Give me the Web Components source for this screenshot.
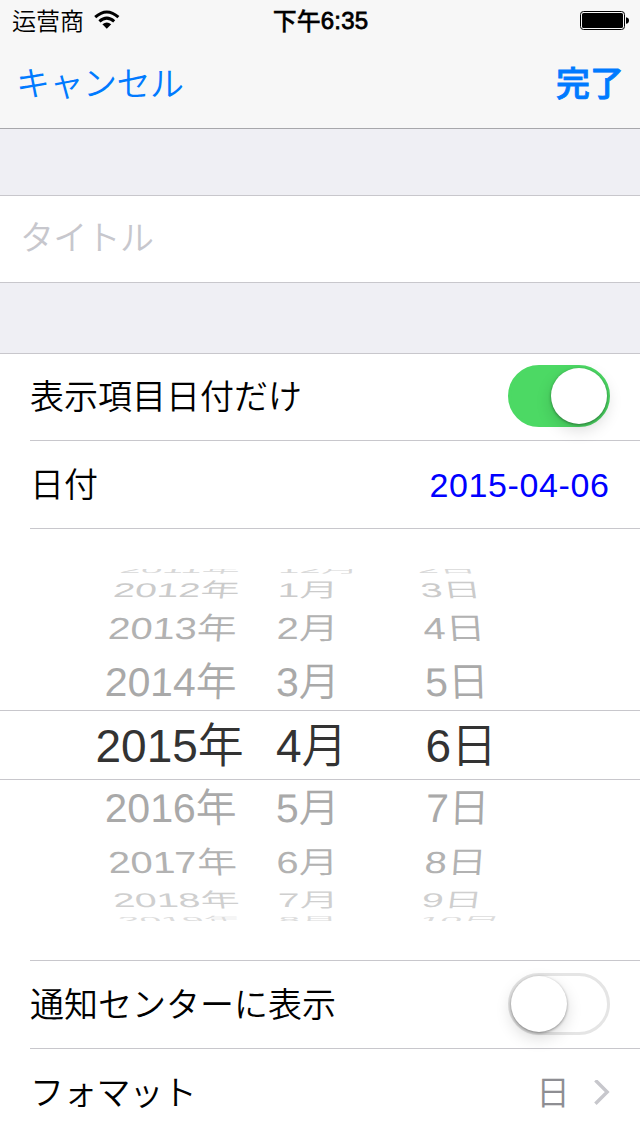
<!DOCTYPE html>
<html lang="ja">
<head>
<meta charset="utf-8">
<title>日付</title>
<style>
html,body{margin:0;padding:0;width:640px;height:1136px;overflow:hidden;background:#efeff4;font-family:"Liberation Sans","Noto Sans CJK JP",sans-serif;font-size:34px;color:#000}
</style>
</head>
<body>
<date-editor></date-editor>
<script>
const define = (name, markup, setup) => {
  const tpl = document.createElement('template');
  tpl.innerHTML = markup;
  customElements.define(name, class extends HTMLElement {
    connectedCallback() {
      if (this.shadowRoot) return;
      this.attachShadow({ mode: 'open' }).append(tpl.content.cloneNode(true));
      if (setup) setup(this, this.shadowRoot);
    }
  });
};

define('status-bar', `
<style>
:host{display:grid;grid-template-columns:1fr auto 1fr;align-items:center;height:40px;padding:0 11px 0 12px;box-sizing:border-box;font-size:24px;line-height:40px}
.carrier{display:flex;align-items:center;gap:10px;font-family:"Noto Sans CJK SC",sans-serif;font-weight:350}
.time{font-family:"Liberation Sans","Noto Sans CJK SC",sans-serif;font-weight:500;display:flex}
.digits{-webkit-text-stroke:.8px #000;letter-spacing:.2px;line-height:42px;height:40px}
.cjk{font-family:"Noto Sans CJK SC",sans-serif;font-weight:500;-webkit-text-stroke:.3px #000}
svg{display:block}
.battery{justify-self:end}
</style>
<div class="carrier"><span>运营商</span>
<svg width="26" height="20" viewBox="0 0 26 20"><g fill="none" stroke="#000" stroke-width="3"><path d="M1.2 7.2Q12.8-3.2 24.4 7.2"/><path d="M5.4 11.4Q12.8 4.8 20.2 11.4"/></g><path d="M8.4 14.3Q12.8 10.5 17.2 14.3L12.8 18.7Z"/></svg></div>
<div class="time"><span class="cjk">下午</span><span class="digits">6:35</span></div>
<svg class="battery" width="49" height="20" viewBox="0 0 49 20"><rect x=".5" y="1.5" width="44" height="18" rx="3" fill="none" stroke="#000"/><rect x="2" y="3" width="41" height="15" rx="1.6"/><path d="M46 7.2Q49 7.7 49 10.5T46 13.8Z"/></svg>
`);

define('nav-bar', `
<style>
:host{display:flex;justify-content:space-between;align-items:center;height:88px;padding:0 16px 0 16px;color:#007aff;line-height:88px}
slot{display:block}
::slotted([slot=left]){font-weight:350;letter-spacing:-.5px}
::slotted([slot=right]){font-weight:500;-webkit-text-stroke:.8px #007aff}
</style>
<slot name="left"></slot><slot name="right"></slot>`);

define('form-group', `
<style>:host{display:block;background:#fff;border-top:1px solid #c8c7cc}</style><slot></slot>`);

define('form-row', `
<style>
:host{display:flex;justify-content:space-between;height:87px;margin-left:30px;padding-right:30px;border-bottom:1px solid #c8c7cc;align-items:center;line-height:86px;font-weight:350}
:host([last]){border-bottom-color:transparent}
.value{display:flex;align-items:center}
</style>
<slot></slot><div class="value"><slot name="value"></slot></div>`);

define('text-field', `
<style>:host{display:block;height:86px;padding-left:20px;line-height:84px;color:#c7c7cd;border-bottom:1px solid #c8c7cc;font-weight:350;letter-spacing:-.7px}</style><slot></slot>`);

define('toggle-switch', `
<style>
:host{display:flex;align-items:center;box-sizing:border-box;width:102px;height:62px;border-radius:31px;border:3px solid #e5e5e5;margin-bottom:2px}
:host([on]){background:#4cd964;border-color:#4cd964;justify-content:flex-end}
.knob{width:56px;height:56px;border-radius:50%;background:#fff;box-shadow:0 1px 3px rgba(0,0,0,.4),0 6px 16px rgba(0,0,0,.15)}
</style><div class="knob"></div>`);

define('chevron-icon', `
<style>:host{display:block}svg{display:block}</style>
<svg width="16" height="26" viewBox="0 0 16 26"><path d="M1.4 0.2L13.2 12 1.4 23.8" fill="none" stroke="#c7c7cc" stroke-width="3.4"/></svg>`);

define('wheel-column', `
<style>
:host{display:block;overflow:hidden}
svg{display:block}
text{font-family:"Liberation Sans","Noto Sans CJK JP",sans-serif;font-size:46px;font-weight:350}
</style>
<svg height="352" width="100%"></svg>`, (host, root) => {
  // each turn of the drum: baseline, vertical scale, horizontal scale, lean, fill
  const turns = [
    [3.5, .19, .83, .3, '#d8d8d8'], [28, .43, .852, .14, '#cbcbcb'], [70, .66, .868, .075, '#b2b2b2'],
    [127, .87, .89, .03, '#a9a9a9'], [193, 1.01, 1, 0, '#333'], [253, .87, .89, -.03, '#a9a9a9'],
    [304, .66, .868, -.075, '#b2b2b2'], [338, .43, .852, -.14, '#cfcfcf'], [354, .19, .83, -.5, '#dcdcdc']
  ];
  const svg = root.querySelector('svg');
  const side = Number(host.getAttribute('side'));
  const xs = host.getAttribute('starts').split(',').map(Number);
  host.getAttribute('items').split(',').forEach((label, i) => {
    const [y, sy, sx, lean, fill] = turns[i];
    const t = document.createElementNS('http://www.w3.org/2000/svg', 'text');
    t.setAttribute('transform', `matrix(${sx} 0 ${-lean * side * sy} ${sy} ${xs[i]} ${y})`);
    t.setAttribute('fill', fill);
    t.textContent = label;
    svg.append(t);
  });
});

define('date-wheel', `
<style>
:host{display:grid;height:432px;align-items:center;background:#fff}
.drum,.band{grid-area:1/1}
.drum{display:grid;grid-template-columns:260px 140px 240px;height:352px}
.band{height:68px;border:solid #c8c7cc;border-width:1px 0}
.rule{grid-area:1/1;align-self:end;margin-left:30px;height:1px;background:#c8c7cc}
</style>
<div class="band"></div>
<div class="drum">
<wheel-column side="1" starts="119,112.5,107.5,104.5,95.5,105,109,114,120" items="2011年,2012年,2013年,2014年,2015年,2016年,2017年,2018年,2019年"></wheel-column>
<wheel-column side="0.15" starts="18,17.5,16.5,16,16,16,16.5,18,19" items="12月,1月,2月,3月,4月,5月,6月,7月,8月"></wheel-column>
<wheel-column side="-1" starts="18,21.5,24,25.5,25.5,25.5,24,21,18" items="2日,3日,4日,5日,6日,7日,8日,9日,10日"></wheel-column>
</div>
<div class="rule"></div>`);

define('date-editor', `
<style>
:host{display:block;width:640px}
header{height:128px;background:#f7f7f7;border-bottom:1px solid #a7a7ab;margin-bottom:66px}
form-group + form-group{margin-top:70px}
.date{color:#00f;font-weight:400;letter-spacing:.6px;margin-right:.5px}
.format{color:#8e8e93;margin-right:24px}
.tight{letter-spacing:-.8px}
.first{height:86px}
</style>
<header>
<status-bar></status-bar>
<nav-bar><span slot="left">キャンセル</span><span slot="right">完了</span></nav-bar>
</header>
<form-group><text-field>タイトル</text-field></form-group>
<form-group>
<form-row class="first">表示項目日付だけ<toggle-switch slot="value" on></toggle-switch></form-row>
<form-row>日付<span class="date" slot="value">2015-04-06</span></form-row>
<date-wheel></date-wheel>
<form-row>通知センターに表示<toggle-switch slot="value"></toggle-switch></form-row>
<form-row last><span class="tight">フォマット</span><span class="format" slot="value">日</span><chevron-icon slot="value"></chevron-icon></form-row>
</form-group>`);
</script>
</body>
</html>
